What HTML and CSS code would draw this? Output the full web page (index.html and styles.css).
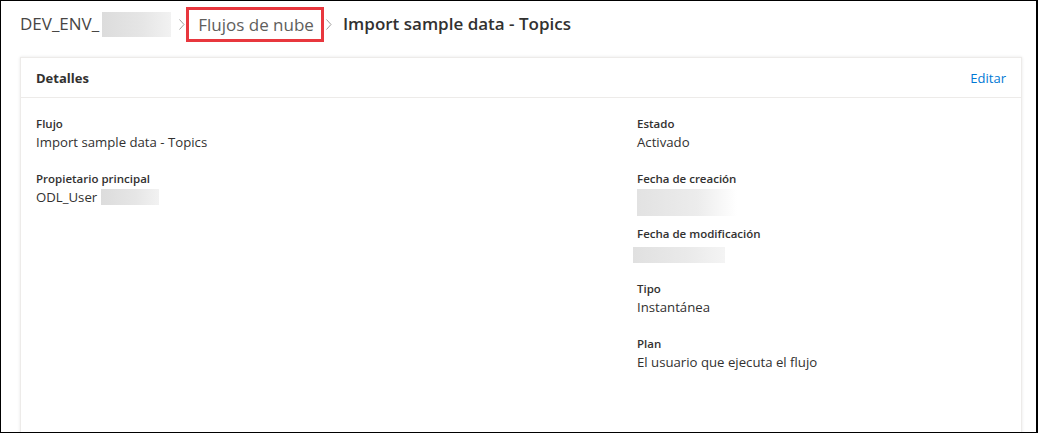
FILE: index.html
```html
<!DOCTYPE html>
<html lang="es">
<head>
<meta charset="utf-8">
<title>Import sample data - Topics</title>
<link rel="stylesheet" href="styles.css">
</head>
<body>
<div class="frame">
  <nav class="breadcrumb">
    <span class="crumb env">DEV_ENV_</span>
    <span class="redact env-redact"></span>
    <svg class="chev" width="6" height="11" viewBox="0 0 6 11"><path d="M0.5 0.5 L5 5.5 L0.5 10.5" fill="none" stroke="#a19f9d" stroke-width="1"/></svg>
    <span class="crumb link highlight">Flujos de nube</span>
    <svg class="chev chev-after" width="6" height="11" viewBox="0 0 6 11"><path d="M0.5 0.5 L5 5.5 L0.5 10.5" fill="none" stroke="#a19f9d" stroke-width="1"/></svg>
    <span class="crumb current">Import sample data - Topics</span>
  </nav>

  <section class="card">
    <header class="card-header">
      <h2 class="card-title">Detalles</h2>
      <a class="edit" href="#">Editar</a>
    </header>
    <div class="card-body">
      <div class="col">
        <div class="field">
          <div class="label">Flujo</div>
          <div class="value">Import sample data - Topics</div>
        </div>
        <div class="field">
          <div class="label">Propietario principal</div>
          <div class="value">ODL_User <span class="redact owner-redact"></span></div>
        </div>
      </div>
      <div class="col">
        <div class="field">
          <div class="label">Estado</div>
          <div class="value">Activado</div>
        </div>
        <div class="field">
          <div class="label">Fecha de creación</div>
          <div class="value"><span class="redact created-redact"></span></div>
        </div>
        <div class="field">
          <div class="label">Fecha de modificación</div>
          <div class="value"><span class="redact modified-redact"></span></div>
        </div>
        <div class="field">
          <div class="label">Tipo</div>
          <div class="value">Instantánea</div>
        </div>
        <div class="field">
          <div class="label">Plan</div>
          <div class="value">El usuario que ejecuta el flujo</div>
        </div>
      </div>
    </div>
  </section>
</div>
</body>
</html>
```

FILE: styles.css
```css
* { box-sizing: border-box; }

html, body {
  margin: 0;
  padding: 0;
  background: #ffffff;
}

body {
  font-family: "Open Sans", "Noto Sans", "Liberation Sans", sans-serif;
  color: #323130;
}

.frame {
  width: 1038px;
  height: 433px;
  border-top: 1px solid #000;
  border-left: 1px solid #000;
  border-bottom: 1px solid #000;
  border-right: 2px solid #000;
  overflow: hidden;
  background: #fff;
}

.breadcrumb {
  display: flex;
  align-items: center;
  height: 46px;
  padding-left: 19px;
}

.crumb {
  font-size: 17px;
  line-height: 24px;
  white-space: nowrap;
}

.env { color: #484644; }

.redact {
  display: inline-block;
  flex: none;
  background: linear-gradient(90deg, #dcdcdc 0%, #e6e6e6 60%, #f2f2f2 100%);
}

.env-redact {
  width: 69px;
  height: 25px;
  margin-left: 3px;
}

.chev {
  margin: 0 5px 0 8px;
  flex: none;
}

.chev-after {
  margin: 0 0 0 2px;
}

.link { color: #605e5c; }

.highlight {
  border: 3px solid #e8373e;
  padding: 3px 7px 2px 9px;
  line-height: 24px;
  margin-left: -4px;
}

.current {
  font-weight: 600;
  font-size: 17px;
  margin-left: 11px;
}

.card {
  margin: 10px 14px 0 19px;
  border: 1px solid #edebe9;
  border-bottom: none;
  box-shadow: 0 0 3px rgba(0,0,0,0.10);
  height: 400px;
}

.card-header {
  display: flex;
  align-items: center;
  justify-content: space-between;
  height: 40px;
  padding: 0 15px;
  border-bottom: 1px solid #edebe9;
}

.card-title {
  margin: 0;
  font-size: 13px;
  font-weight: 700;
  color: #323130;
}

.edit {
  font-size: 13px;
  color: #0078d4;
  text-decoration: none;
}

.card-body {
  display: grid;
  grid-template-columns: 601px 1fr;
  padding: 18px 15px 0 15px;
}

.field {
  display: flex;
  flex-direction: column;
  margin-bottom: 18px;
}

.label {
  font-size: 11.5px;
  font-weight: 600;
  line-height: 16px;
  color: #323130;
}

.value {
  font-size: 13.2px;
  line-height: 21px;
  height: 21px;
  color: #323130;
  display: flex;
  align-items: flex-start;
  gap: 4px;
}

.owner-redact {
  width: 58px;
  height: 16px;
  margin-top: 2px;
}

.created-redact {
  width: 100px;
  height: 27px;
  margin-top: 2px;
  background: linear-gradient(90deg, #e2e2e2 0%, #ececec 60%, #ffffff 100%);
}

.modified-redact {
  width: 92px;
  height: 16px;
  margin-left: -4px;
  margin-top: 5px;
  background: linear-gradient(90deg, #e0e0e0 0%, #eaeaea 60%, #f4f4f4 100%);
}
```
